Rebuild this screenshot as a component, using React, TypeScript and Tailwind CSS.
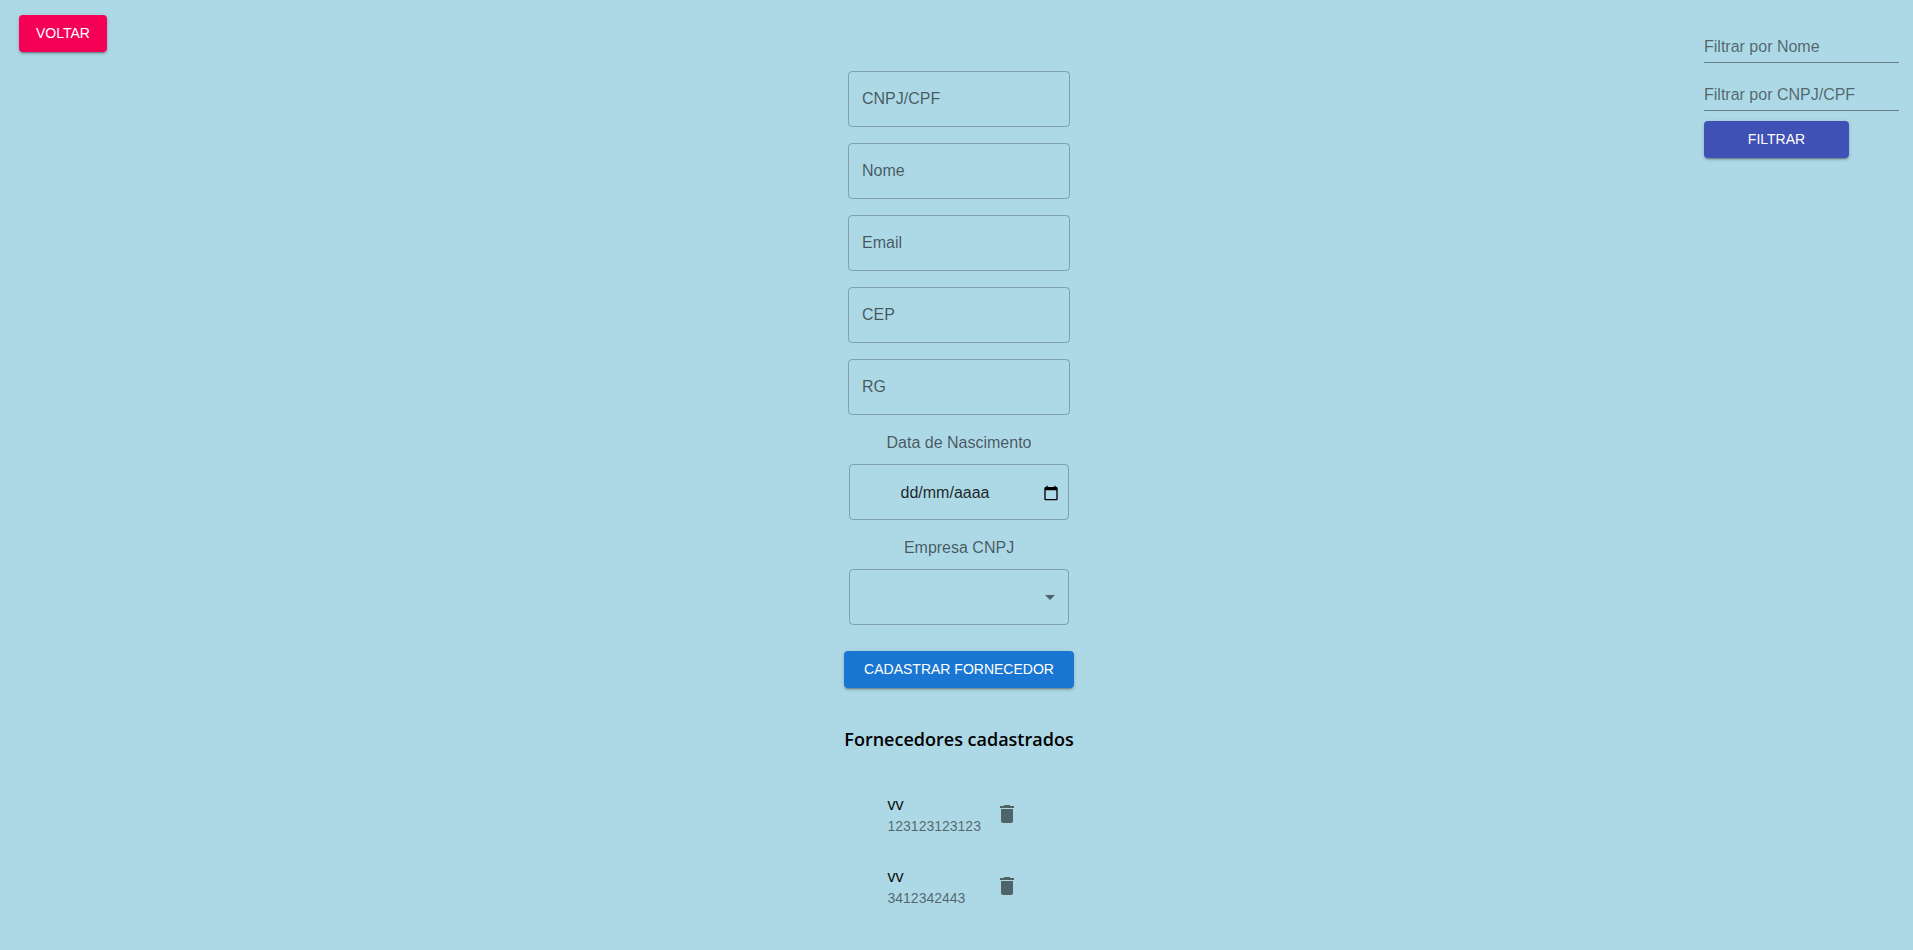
import { useState } from "react";

const raised =
  "h-[37px] rounded-[4px] pb-0.5 text-[14px] leading-6 text-white uppercase cursor-pointer shadow-[0_3px_1px_-2px_rgba(0,0,0,0.2),0_2px_2px_0_rgba(0,0,0,0.14),0_1px_5px_0_rgba(0,0,0,0.12)]";
const outlined =
  "h-14 rounded-[4px] border border-black/25 bg-transparent px-[13px] text-[16px] outline-none focus:border-[#1976d2]";

const fields = ["CNPJ/CPF", "Nome", "Email", "CEP", "RG"];
const filters = ["Filtrar por Nome", "Filtrar por CNPJ/CPF"];

type Supplier = { id: number; name: string; doc: string };

function TrashIcon() {
  return (
    <svg viewBox="0 0 24 24" className="size-6" fill="currentColor" aria-hidden="true">
      <path d="M6 19c0 1.100.9 2 2 2h8c1.100 0 2-.9 2-2V7H6v12zM19 4h-3.500l-1-1h-5l-1 1H5v2h14V4z" />
    </svg>
  );
}

export default function App() {
  const [suppliers, setSuppliers] = useState<Supplier[]>([
    { id: 1, name: "vv", doc: "123123123123" },
    { id: 2, name: "vv", doc: "3412342443" },
  ]);

  return (
    <div className="grid min-h-screen grid-cols-[1fr_auto_1fr] items-start bg-[#add8e6] pr-[14px] pl-[19px] font-['Liberation_Sans',Arial,sans-serif] text-black">
      <button type="button" className={`${raised} mt-[15px] w-[88px] justify-self-start bg-[#f50057]`}>
        Voltar
      </button>

      <main className="flex flex-col items-center pt-[71px]">
        <form className="flex flex-col items-center" onSubmit={(e) => e.preventDefault()}>
          <div className="flex flex-col gap-4">
            {fields.map((name) => (
              <input
                key={name}
                type="text"
                aria-label={name}
                placeholder={name}
                className={`${outlined} w-[222px] placeholder:text-black/60`}
              />
            ))}
          </div>

          <label htmlFor="birth" className="mt-4 text-[16px] leading-6 text-black/60">
            Data de Nascimento
          </label>
          <div className={`${outlined} mt-[9px] flex w-[220px] items-center pt-0.5`}>
            <input
              id="birth"
              type="text"
              placeholder="dd/mm/aaaa"
              className="min-w-0 flex-1 bg-transparent pr-4 text-center outline-none placeholder:text-black/85"
            />
            <button type="button" aria-label="Abrir calendário" className="-mr-1 cursor-pointer">
              <svg viewBox="0 0 24 24" className="size-4" fill="currentColor" aria-hidden="true">
                <path d="M20 3h-1V1h-2v2H7V1H5v2H4c-1.100 0-2 .9-2 2v16c0 1.100.9 2 2 2h16c1.100 0 2-.9 2-2V5c0-1.100-.9-2-2-2zm0 18H4V8h16v13z" />
              </svg>
            </button>
          </div>

          <label htmlFor="company" className="mt-4 text-[16px] leading-6 text-black/60">
            Empresa CNPJ
          </label>
          <div className="relative mt-[9px]">
            <select id="company" className={`${outlined} w-[220px] appearance-none`}>
              <option value=""></option>
            </select>
            <svg
              viewBox="0 0 24 24"
              className="pointer-events-none absolute top-4 right-[7px] size-6 text-black/54"
              fill="currentColor"
              aria-hidden="true"
            >
              <path d="M7 10l5 5 5-5z" />
            </svg>
          </div>

          <button type="submit" className={`${raised} mt-[26px] w-[230px] bg-[#1976d2]`}>
            Cadastrar Fornecedor
          </button>
        </form>

        <h3 className="mt-[38px] font-['Open_Sans',sans-serif] text-[18px] leading-[26px] font-semibold">
          Fornecedores cadastrados
        </h3>

        <ul className="mt-[26px] pr-3">
          {suppliers.map((s) => (
            <li key={s.id} className="flex h-[72px] items-center">
              <div className="w-[107px]">
                <p className="font-['Open_Sans',sans-serif] text-[16px] leading-6">{s.name}</p>
                <p className="text-[14px] leading-5 text-black/54">{s.doc}</p>
              </div>
              <button
                type="button"
                aria-label={`Excluir ${s.doc}`}
                className="cursor-pointer text-black/54"
                onClick={() => setSuppliers(suppliers.filter((x) => x.id !== s.id))}
              >
                <TrashIcon />
              </button>
            </li>
          ))}
        </ul>
      </main>

      <form
        className="mt-[31px] flex w-[195px] flex-col justify-self-end"
        onSubmit={(e) => e.preventDefault()}
      >
        {filters.map((name) => (
          <input
            key={name}
            type="text"
            aria-label={name}
            placeholder={name}
            className="mb-4 h-8 w-full border-b border-black/42 bg-transparent text-[16px] outline-none placeholder:text-black/54"
          />
        ))}
        <button type="submit" className={`${raised} -mt-[6px] w-[145px] bg-[#3f51b5]`}>
          Filtrar
        </button>
      </form>
    </div>
  );
}
